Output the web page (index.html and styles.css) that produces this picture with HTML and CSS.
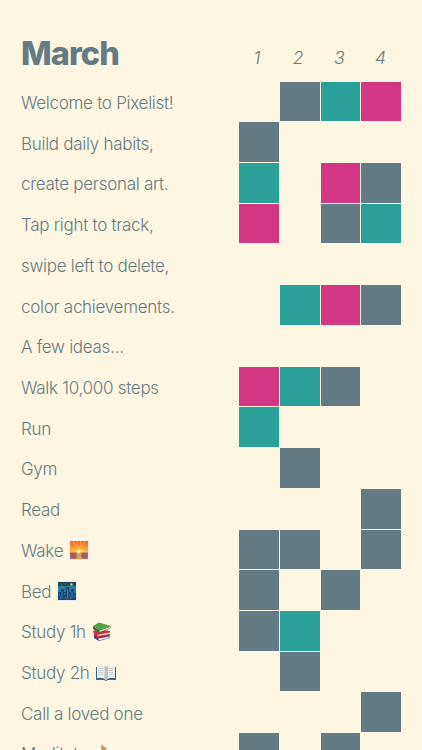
FILE: index.html
```html
<!DOCTYPE html>
<html lang="en">
<head>
  <meta charset="UTF-8">
  <meta name="viewport" content="width=device-width, initial-scale=1.0">
  <title>Pixelist</title>
  <link rel="stylesheet" href="styles.css">
</head>
<body>

  <!-- Month and days -->
  <div class="header">
    <h1>March</h1>
    <div class="days"><span>1</span><span>2</span><span>3</span><span>4</span></div>
  </div>

  <!-- Habits -->
  <div class="habits">
    <div class="row">
      <p>Welcome to Pixelist!</p>
      <div class="cells"><i></i><i class="gray"></i><i class="teal"></i><i class="pink"></i></div>
    </div>
    <div class="row">
      <p>Build daily habits,</p>
      <div class="cells"><i class="gray"></i><i></i><i></i><i></i></div>
    </div>
    <div class="row">
      <p>create personal art.</p>
      <div class="cells"><i class="teal"></i><i></i><i class="pink"></i><i class="gray"></i></div>
    </div>
    <div class="row">
      <p>Tap right to track,</p>
      <div class="cells"><i class="pink"></i><i></i><i class="gray"></i><i class="teal"></i></div>
    </div>
    <div class="row">
      <p>swipe left to delete,</p>
      <div class="cells"><i></i><i></i><i></i><i></i></div>
    </div>
    <div class="row">
      <p>color achievements.</p>
      <div class="cells"><i></i><i class="teal"></i><i class="pink"></i><i class="gray"></i></div>
    </div>
    <div class="row">
      <p>A few ideas...</p>
      <div class="cells"><i></i><i></i><i></i><i></i></div>
    </div>
    <div class="row">
      <p>Walk 10,000 steps</p>
      <div class="cells"><i class="pink"></i><i class="teal"></i><i class="gray"></i><i></i></div>
    </div>
    <div class="row">
      <p>Run</p>
      <div class="cells"><i class="teal"></i><i></i><i></i><i></i></div>
    </div>
    <div class="row">
      <p>Gym</p>
      <div class="cells"><i></i><i class="gray"></i><i></i><i></i></div>
    </div>
    <div class="row">
      <p>Read</p>
      <div class="cells"><i></i><i></i><i></i><i class="gray"></i></div>
    </div>
    <div class="row">
      <p>Wake</p>
      <!-- sunrise -->
      <svg class="icon" viewBox="0 0 20 20">
        <defs>
          <linearGradient id="sky" x1="0" y1="0" x2="0" y2="1">
            <stop offset="0" stop-color="#e5692f"/>
            <stop offset="0.6" stop-color="#fba53a"/>
          </linearGradient>
          <radialGradient id="sun" cx="0.5" cy="1" r="0.7">
            <stop offset="0" stop-color="#fff27a"/>
            <stop offset="1" stop-color="#fcb033" stop-opacity="0"/>
          </radialGradient>
        </defs>
        <rect width="20" height="20" rx="1" fill="#f1edea"/>
        <rect x="1" y="1" width="18" height="18" fill="url(#sky)"/>
        <path d="M10 12L1 7M10 12L4 1M10 12L8 1M10 12L12 1M10 12L16 1M10 12L19 7M10 12L1 11M10 12L19 11" stroke="#ffc24b" stroke-width="0.7"/>
        <rect x="1" y="3" width="18" height="10" fill="url(#sun)"/>
        <rect x="1" y="12.5" width="18" height="6.5" fill="#a96861"/>
        <path d="M1 14h6M13 14h6M2 16.5h5M13 16.5h5" stroke="#8b5a68" stroke-width="1"/>
        <path d="M7 13h6l-1 2 1 4H7l1-4z" fill="#e69a55"/>
        <circle cx="10" cy="11.5" r="1.7" fill="#fff59a"/>
      </svg>
      <div class="cells"><i class="gray"></i><i class="gray"></i><i></i><i class="gray"></i></div>
    </div>
    <div class="row">
      <p>Bed</p>
      <!-- night city -->
      <svg class="icon" viewBox="0 0 20 20">
        <rect width="20" height="20" rx="1" fill="#e6ebee"/>
        <rect x="1" y="1" width="18" height="18" fill="#2f7a97"/>
        <rect x="1" y="1" width="18" height="4" fill="#1c4a58"/>
        <path d="M1 19v-8h3V8h3v3h2V6h3v5h2V8h3v4h2v7z" fill="#174878"/>
        <path d="M5 10v8M10.500 8v10M15 10v7" stroke="#2f81b5" stroke-width="1"/>
        <path d="M2 14h1M7 13h1M12 14h1M17 15h1M8 17h1M13 17h1M3 17h1" stroke="#6f9d8c"/>
        <circle cx="14.500" cy="3.500" r="1.200" fill="#d3cf83"/>
        <path d="M4 4h1M8 3h1M11 5h1" stroke="#79b1a1" stroke-width="0.7"/>
      </svg>
      <div class="cells"><i class="gray"></i><i></i><i class="gray"></i><i></i></div>
    </div>
    <div class="row">
      <p>Study 1h</p>
      <!-- books -->
      <svg class="icon" viewBox="0 0 20 20">
        <path d="M2 14l4-1 11 0 1 3-11 3-5-3z" fill="#3a3f7c"/>
        <path d="M6 16.500l11-2 .5 1.500L7 18.500z" fill="#e3e4df"/>
        <path d="M1 9l5-2 12 2v3L6 14l-4-2z" fill="#c5343a"/>
        <path d="M5 13l13-2.500v1.500L6 14.500z" fill="#f0e1d6"/>
        <path d="M2 11.500l4 2.500 12-2v1.500L6 16l-4-2z" fill="#bd2933"/>
        <path d="M1 4l6 4 12-4-1 2.500-11 4L1 7z" fill="#2d7038"/>
        <path d="M7.500 8.500l10.500-3.500v1.200L7.500 10z" fill="#e1e5cd"/>
        <path d="M1 4l6-3.500 12 3.500-12 4z" fill="#4fa545"/>
      </svg>
      <div class="cells"><i class="gray"></i><i class="teal"></i><i></i><i></i></div>
    </div>
    <div class="row">
      <p>Study 2h</p>
      <!-- open book -->
      <svg class="icon" viewBox="0 0 20 20">
        <path d="M0 4h20v13h-8l-2 1-2-1H0z" fill="#3f6880"/>
        <path d="M1 3q6-2 9 1 3-3 9-1v12q-6-1-9 2-3-3-9-2z" fill="#eeeeea"/>
        <path d="M8.500 3q1 0 1.500 1v13q-.5-1.500-1.500-1.500zM10 4q1-1 2-1v12q-1 .5-2 2z" fill="#bcc3c3"/>
        <path d="M2.500 5.500h5M2.500 7.500h5M2.500 9.500h5M2.500 11.500h5M12.500 5.500h5M12.500 7.500h5M12.500 9.500h5M12.500 11.500h5" stroke="#c2c8c9" stroke-width="0.7"/>
      </svg>
      <div class="cells"><i></i><i class="gray"></i><i></i><i></i></div>
    </div>
    <div class="row">
      <p>Call a loved one</p>
      <div class="cells"><i></i><i></i><i></i><i class="gray"></i></div>
    </div>
    <div class="row">
      <p>Meditate</p>
      <!-- folded hands -->
      <svg class="icon" viewBox="0 0 20 20">
        <path d="M8 1q2-1 2 1l3 1q1 1 0 3l1 7-3 6H6l-1-5 3-5z" fill="#dfad64"/>
        <path d="M10 2v8l-2 5M11 4l1 9" stroke="#b98a52" stroke-width="1" fill="none"/>
      </svg>
      <div class="cells"><i class="gray"></i><i></i><i class="gray"></i><i></i></div>
    </div>
  </div>

</body>
</html>
```
FILE: styles.css
```css
* {
  box-sizing: border-box;
}
body {
  margin: 0;
  padding: 34px 20px 0 21px;
  height: 750px;
  overflow: hidden;
  background-color: #fdf6e3;
  color: #657b83;
  font-family: Inter, "Liberation Sans", sans-serif;
}
.header {
  display: flex;
  justify-content: space-between;
  height: 47.6px;
}
h1 {
  margin: 0;
  font-size: 32.5px;
  line-height: 40px;
  font-weight: 800;
  letter-spacing: -0.9px;
}
.days {
  display: grid;
  grid-template-columns: repeat(4, 41.2px);
  padding-top: 12px;
  margin-right: -2px;
  font-size: 17.5px;
  line-height: 24px;
  font-style: italic;
  font-weight: 300;
  text-align: center;
}
.days span {
  padding-right: 6px;
}
.row {
  display: flex;
  align-items: center;
  height: 40.73px;
}
.row p {
  margin: 0;
  padding-top: 2px;
  font-size: 17px;
  line-height: 24px;
  font-weight: 300;
  letter-spacing: -0.28px;
  white-space: nowrap;
}
.icon {
  width: 20px;
  height: 20px;
  margin: 1px 0 0 6px;
}
.cells {
  display: grid;
  grid-template-columns: repeat(4, 40.75px);
  height: 40.73px;
  margin-left: auto;
}
.cells i {
  border: solid #fdf6e3;
  border-width: 0 1px 1px 0;
}
.gray {
  background-color: #657b83;
}
.teal {
  background-color: #2aa198;
}
.pink {
  background-color: #d33682;
}
```
